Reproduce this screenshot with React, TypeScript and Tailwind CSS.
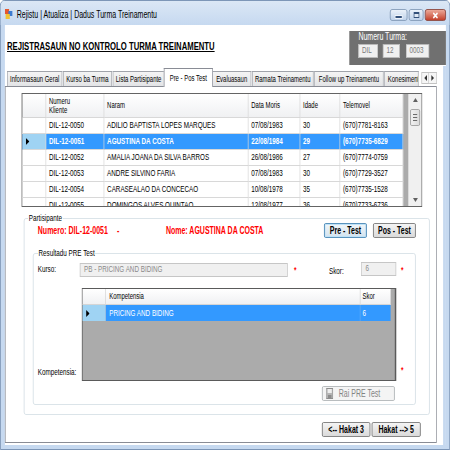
import React from 'react';

type Row = { id: string; name: string; dob: string; age: string; phone: string; selected?: boolean };

const rows: Row[] = [
  { id: 'DIL-12-0050', name: 'ADILIO BAPTISTA LOPES MARQUES', dob: '07/08/1983', age: '30', phone: '(670)7781-8163' },
  { id: 'DIL-12-0051', name: 'AGUSTINA DA COSTA', dob: '22/08/1984', age: '29', phone: '(670)7735-6829', selected: true },
  { id: 'DIL-12-0052', name: 'AMALIA JOANA DA SILVA BARROS', dob: '26/08/1986', age: '27', phone: '(670)7774-0759' },
  { id: 'DIL-12-0053', name: 'ANDRE SILVINO FARIA', dob: '07/08/1983', age: '30', phone: '(670)7729-3527' },
  { id: 'DIL-12-0054', name: 'CARASEALAO DA CONCECAO', dob: '10/08/1978', age: '35', phone: '(670)7735-1528' },
  { id: 'DIL-12-0055', name: 'DOMINGOS ALVES QUINTAO', dob: '12/08/1977', age: '36', phone: '(670)7733-6736' },
];

const colWidths = ['w-[83px]', 'w-[206px]', 'w-[74px]', 'w-[57px]', 'w-[90px]'];

const tabs = [
  { label: 'Informasaun Geral', w: 'w-[79px]' },
  { label: 'Kurso ba Turma', w: 'w-[70px]' },
  { label: 'Lista Partisipante', w: 'w-[74px]' },
  { label: 'Pre - Pos Test', w: 'w-[70px]', active: true },
  { label: 'Evaluasaun', w: 'w-[56px]' },
  { label: 'Ramata Treinamentu', w: 'w-[88px]' },
  { label: 'Follow up Treinamentu', w: 'w-[99px]' },
];

function AppIcon() {
  return (
    <svg width="11" height="10" viewBox="0 0 11 10">
      <rect x="0" y="0" width="6" height="5" fill="#e4572e" />
      <rect x="5" y="2" width="6" height="5" fill="#3b7bd0" />
      <rect x="1" y="5" width="6" height="5" fill="#f1c232" />
    </svg>
  );
}

function Pointer() {
  return (
    <svg width="5" height="7" viewBox="0 0 5 7">
      <path d="M0 0L5 3.5L0 7Z" fill="#000" />
    </svg>
  );
}

function TitleBar() {
  return (
    <div className="flex h-[24px] items-start rounded-t-[5px] bg-linear-to-b from-[#dbe7f5] to-[#c6d9f0] pl-[6px] pr-[5px] pt-[8px]">
      <AppIcon />
      <span className="ml-[6px] text-[10px] leading-[11px] text-black">Rejistu | Atualiza | Dadus Turma Treinamentu</span>
      <div className="ml-auto flex gap-[2px]">
        <div className="flex h-[12px] w-[25px] items-end justify-center rounded-[3px] border border-[#8198b6] bg-linear-to-b from-[#eaf1f9] to-[#bfd2ea] pb-[2px]">
          <div className="h-[2px] w-[9px] bg-[#33507a] shadow-[0_0_0_1px_rgba(255,255,255,0.7)]" />
        </div>
        <div className="flex h-[12px] w-[21px] items-center justify-center rounded-[3px] border border-[#8198b6] bg-linear-to-b from-[#eaf1f9] to-[#bfd2ea]">
          <div className="h-[6px] w-[8px] border border-t-2 border-[#33507a] bg-[#dfe8f3]" />
        </div>
        <div className="flex h-[12px] w-[30px] items-center justify-center rounded-[3px] border border-[#8a3b2f] bg-linear-to-b from-[#eba898] to-[#c3402b]">
          <svg width="10" height="7" viewBox="0 0 10 7">
            <path d="M2 1L8 6M8 1L2 6" stroke="#fff" strokeWidth="2" />
          </svg>
        </div>
      </div>
    </div>
  );
}

function Box({ w, children }: { w: string; children: React.ReactNode }) {
  return (
    <div className={`${w} flex h-[14px] items-center border border-[#b9b9b9] bg-[#f0f0f0] pl-[4px] text-[9px] text-[#7a7a7a]`}>
      {children}
    </div>
  );
}

function Header() {
  return (
    <div className="flex h-[41px] items-start justify-between">
      <h1 className="pl-[3px] pt-[15px] text-[11px] font-bold leading-[12px] underline">
        REJISTRASAUN NO KONTROLO TURMA TREINAMENTU
      </h1>
      <div className="mt-[6px] h-[34px] w-[138px] bg-[#707070] pl-[13px] pt-[1px]">
        <div className="text-[10px] leading-[10px] text-white">Numeru Turma:</div>
        <div className="mt-[2px] flex">
          <Box w="w-[28px]">DIL</Box>
          <Box w="w-[24px] ml-[7px]">12</Box>
          <Box w="w-[33px] ml-[9px]">0003</Box>
        </div>
      </div>
    </div>
  );
}

function TabStrip() {
  return (
    <div className="flex h-[20px] items-end gap-[1px] pl-[3px]">
      {tabs.map((t) =>
        t.active ? (
          <div
            key={t.label}
            className={`${t.w} relative z-10 -mx-[2px] -mb-px flex h-[19px] items-center justify-center border border-b-0 border-[#898c95] bg-white text-[8.5px]`}
          >
            {t.label}
          </div>
        ) : (
          <div
            key={t.label}
            className={`${t.w} flex h-[15px] items-center justify-center border border-b-0 border-[#a0a3aa] bg-linear-to-b from-[#f4f4f4] to-[#e3e4e6] text-[8.5px]`}
          >
            {t.label}
          </div>
        )
      )}
      <div className="flex h-[15px] w-[49px] items-center overflow-hidden whitespace-nowrap border border-b-0 border-[#a0a3aa] bg-linear-to-b from-[#f4f4f4] to-[#e3e4e6] pl-[4px] text-[8.5px]">
        Konesimentu
      </div>
      <div className="mb-[2px] ml-auto flex">
        <div className="flex h-[12px] w-[11px] items-center justify-center border border-[#c3c3c3] bg-[#f6f6f6]">
          <svg width="4" height="6" viewBox="0 0 4 6"><path d="M4 0L0 3L4 6Z" fill="#333" /></svg>
        </div>
        <div className="flex h-[12px] w-[11px] items-center justify-center border border-l-0 border-[#c3c3c3] bg-[#f6f6f6]">
          <svg width="4" height="6" viewBox="0 0 4 6"><path d="M0 0L4 3L0 6Z" fill="#333" /></svg>
        </div>
      </div>
    </div>
  );
}

function Scrollbar() {
  return (
    <div className="flex w-[19px] flex-col border-l border-[#d6d6d6] bg-[#f0f0f0]">
      <div className="flex h-[12px] items-center justify-center">
        <svg width="7" height="4" viewBox="0 0 7 4"><path d="M0 4L3.5 0L7 4Z" fill="#606060" /></svg>
      </div>
      <div className="mx-[2px] mt-[3px] flex h-[17px] flex-col items-center justify-center gap-[2px] rounded-[2px] border border-[#9a9a9a] bg-linear-to-r from-[#f2f2f2] to-[#dcdcdc]">
        <div className="h-px w-[6px] bg-[#6a6a6a]" />
        <div className="h-px w-[6px] bg-[#6a6a6a]" />
        <div className="h-px w-[6px] bg-[#6a6a6a]" />
      </div>
      <div className="flex-1" />
      <div className="flex h-[12px] items-center justify-center">
        <svg width="7" height="4" viewBox="0 0 7 4"><path d="M0 0L3.5 4L7 0Z" fill="#606060" /></svg>
      </div>
    </div>
  );
}

function ClientGrid() {
  const cell = 'flex shrink-0 items-center overflow-hidden whitespace-nowrap border-r border-b border-[#d8d8d8] pl-[4px]';
  return (
    <div className="ml-[23px] mt-[6px] flex h-[114px] w-[572px] border border-[#646464] bg-[#ababab]">
      <div className="flex-1 overflow-hidden">
        <div className="flex h-[24px] w-[544px] bg-linear-to-b from-white to-[#eff0f2] text-[8.5px] leading-[9px]">
          <div className="w-[34px] shrink-0 border-r border-b border-[#d5d5d5]" />
          <div className={`${cell} ${colWidths[0]}`}>Numeru<br />Kliente</div>
          <div className={`${cell} ${colWidths[1]}`}>Naram</div>
          <div className={`${cell} ${colWidths[2]}`}>Data Moris</div>
          <div className={`${cell} ${colWidths[3]}`}>Idade</div>
          <div className={`${cell} ${colWidths[4]}`}>Telemovel</div>
        </div>
        {rows.map((r) => {
          const values = [r.id, r.name, r.dob, r.age, r.phone];
          return (
            <div
              key={r.id}
              className={`flex h-[16px] w-[544px] text-[9px] leading-none ${r.selected ? 'bg-[#3399ff] font-bold text-white' : 'bg-white'}`}
            >
              <div className={`flex w-[34px] shrink-0 items-center border-r border-b border-[#d8d8d8] pl-[5px] ${r.selected ? 'bg-[#9fd3f3]' : 'bg-white'}`}>
                {r.selected && <Pointer />}
              </div>
              {values.map((v, i) => (
                <div key={i} className={`${cell} ${colWidths[i]} ${r.selected ? 'border-[#3399ff]' : ''}`}>
                  {v}
                </div>
              ))}
            </div>
          );
        })}
      </div>
      <Scrollbar />
    </div>
  );
}

function WinButton({ w, focused, children }: { w: string; focused?: boolean; children: React.ReactNode }) {
  return (
    <div
      className={`${w} flex h-[15px] items-center justify-center rounded-[2px] border text-[10px] font-bold leading-none ${
        focused
          ? 'border-[#3c7fb1] bg-linear-to-b from-[#f2f6f9] to-[#d3e3ef] shadow-[inset_0_0_0_1px_#bfe2f7]'
          : 'border-[#707070] bg-linear-to-b from-[#f4f4f4] to-[#dadada]'
      }`}
    >
      {children}
    </div>
  );
}

function Star({ className = '' }: { className?: string }) {
  return <span className={`text-[9px] font-bold leading-none text-[#ff0000] ${className}`}>*</span>;
}

function Floppy() {
  return (
    <svg width="10" height="11" viewBox="0 0 10 11">
      <rect x="0.5" y="0.5" width="9" height="10" fill="#b5b5b5" stroke="#8c8c8c" />
      <rect x="2" y="1" width="6" height="4" fill="#eeeeee" />
      <rect x="2.5" y="7" width="5" height="3" fill="#8c8c8c" />
    </svg>
  );
}

function Resultadu() {
  return (
    <fieldset className="mt-[10px] rounded-[3px] border border-[#d5dfe5]">
      <legend className="ml-[6px] px-[1px] text-[9px] leading-[10px]">Resultadu PRE Test</legend>
      <div className="flex flex-col pb-[3px] pl-[6px]">
        <div className="mt-[5px] flex h-[14px] items-center text-[9px]">
          <span className="w-[60px]">Kurso:</span>
          <div className="flex h-[14px] w-[297px] items-center border border-[#c6c6c6] bg-[#f0f0f0] pl-[5px] text-[#8a8a8a]">
            PB - PRICING AND BIDING
          </div>
          <Star className="ml-[9px] mt-[1px] w-[10px]" />
          <span className="ml-[40px] mt-[3px] w-[46px]">Skor:</span>
          <div className="-mt-[2px] flex h-[14px] w-[50px] items-center border border-[#c6c6c6] bg-[#f0f0f0] pl-[5px] text-[#8a8a8a]">
            6
          </div>
          <Star className="ml-[7px]" />
        </div>
        <div className="mt-[11px] flex items-end">
          <span className="mb-[2px] w-[63px] text-[9px]">Kompetensia:</span>
          <div className="flex h-[93px] w-[449px] flex-col border border-r-2 border-[#5a5a5a] bg-[#ababab]">
            <div className="flex h-[16px] w-[440px] bg-linear-to-b from-white to-[#eff0f2] text-[8.5px] leading-none">
              <div className="w-[33px] border-r border-b border-[#d5d5d5]" />
              <div className="flex w-[364px] items-center border-r border-b border-[#d5d5d5] pl-[5px]">Kompetensia</div>
              <div className="flex w-[43px] items-center border-b border-[#d5d5d5] pl-[3px]">Skor</div>
            </div>
            <div className="flex h-[16px] w-[440px] text-[9px] leading-none text-white">
              <div className="flex w-[33px] items-center border-r border-[#d5d5d5] bg-[#9fd3f3] pl-[5px]">
                <Pointer />
              </div>
              <div className="flex w-[364px] items-center border-r border-[#5fb0ff] bg-[#3399ff] pl-[5px]">PRICING AND BIDING</div>
              <div className="flex w-[43px] items-center bg-[#3399ff] pl-[3px]">6</div>
            </div>
          </div>
          <Star className="mb-[6px] ml-[7px]" />
        </div>
        <div className="mr-[29px] mt-[5px] flex h-[15px] w-[104px] items-center self-end rounded-[2px] border border-[#adb2b5] bg-[#f4f4f4] pl-[5px] text-[10px] leading-none text-[#838383]">
          <Floppy />
          <span className="ml-[8px]">Rai PRE Test</span>
        </div>
      </div>
    </fieldset>
  );
}

function Partisipante() {
  return (
    <fieldset className="ml-[26px] mt-[6px] w-[580px] rounded-[3px] border border-[#d5dfe5]">
      <legend className="ml-[5px] px-[1px] text-[9px] leading-[10px]">Partisipante</legend>
      <div className="pb-[9px] pl-[12px] pr-[19px]">
        <div className="flex h-[15px] items-center text-[10px] font-bold leading-none text-[#ff0000]">
          <span className="w-[120px] pl-[7px]">Numero: DIL-12-0051</span>
          <span className="w-[70px]">-</span>
          <span className="flex-1">Nome: AGUSTINA DA COSTA</span>
          <WinButton w="w-[61px]" focused>
            <span className="text-black">Pre - Test</span>
          </WinButton>
          <div className="w-[9px]" />
          <WinButton w="w-[61px]">
            <span className="text-black">Pos - Test</span>
          </WinButton>
        </div>
        <Resultadu />
      </div>
    </fieldset>
  );
}

function TabControl() {
  return (
    <div className="flex w-[617px] flex-col">
      <TabStrip />
      <div className="flex h-[357px] flex-col items-start border border-[#898c95] bg-white">
        <ClientGrid />
        <Partisipante />
        <div className="mr-[22px] mt-[7px] flex gap-[2px] self-end">
          <WinButton w="w-[69px]">&lt;-- Hakat 3</WinButton>
          <WinButton w="w-[70px]">Hakat --&gt; 5</WinButton>
        </div>
      </div>
    </div>
  );
}

export default function App() {
  return (
    <div className="h-[450px] w-[450px] overflow-hidden bg-white">
      <div className="flex h-[450px] w-[643px] origin-top-left scale-x-[0.7] flex-col rounded-t-[6px] border border-[#6a87ab] bg-[#c6d9f0] font-['Liberation_Sans',Arial,sans-serif] text-black">
        <TitleBar />
        <div className="ml-[6px] mr-[5px] flex h-[420px] flex-col bg-white">
          <Header />
          <div className="flex h-[379px]">
            <TabControl />
            <div className="w-[9px]" />
            <div className="w-[4px] bg-[#c6d9f0]" />
          </div>
        </div>
      </div>
    </div>
  );
}
